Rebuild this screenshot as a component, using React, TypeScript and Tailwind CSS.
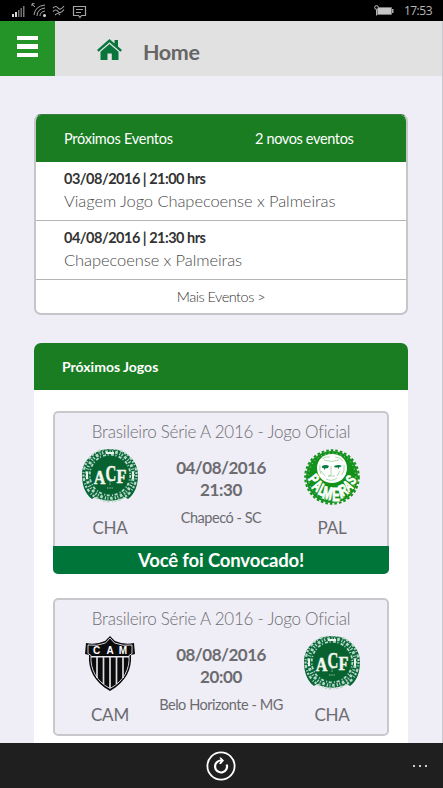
import type { ReactNode } from "react";

const ChapecoenseCrest = () => (
    <svg width="56" height="54" viewBox="0 0 56 54">
        <path d="M28 0C43 0 56 11 56 26c0 10-3 19-10 24l-3-2c-9 5-21 5-30 0l-3 2C3 45 0 36 0 26 0 11 13 0 28 0Z" fill="#08683a" />
        <g fill="none" stroke="#b9d6c5">
            <circle cx="28" cy="26" r="26.5" strokeWidth="2.2" strokeDasharray="2 1.5 1 2.5 3 1.6" />
            <circle cx="28" cy="26" r="23.3" strokeWidth="3" strokeDasharray="1.3 2 2.6 1.8 1 1.4" />
            <circle cx="28" cy="26" r="20.3" strokeWidth="1.8" strokeDasharray="3 1.6 1 2.4" />
        </g>
        <path d="M4 23h2v7H4zM50 23h2v7h-2zM24 3h8v2h-8z" fill="#e8f2ea" />
        <circle cx="28" cy="26" r="18.8" fill="#07622f" />
        <g fill="#f4f6ee" stroke="#f4f6ee" strokeWidth=".5" fontFamily="'Liberation Serif', serif" fontWeight="700" textAnchor="middle">
            <text transform="translate(17.5 34.5) scale(.85 1)" fontSize="19">A</text>
            <text transform="translate(28.8 32) scale(.62 1)" fontSize="24">C</text>
            <text transform="translate(39.5 34) scale(.9 1)" fontSize="18">F</text>
        </g>
        <path d="M28 32v4M25 39h6" stroke="#9fc6ad" strokeDasharray="1 .6" />
    </svg>
);

const PalmeirasCrest = () => (
    <svg width="56" height="56" viewBox="0 0 56 56">
        <circle cx="28" cy="28" r="26" fill="#12911b" />
        <circle cx="28" cy="28" r="26.8" fill="none" stroke="#12911b" strokeWidth="2" strokeDasharray="2.6 2" />
        <circle cx="28" cy="28" r="23.8" fill="none" stroke="#cbeccd" strokeWidth=".8" strokeDasharray="1 3" />
        <path d="M28 5c9 0 15 6 15 14 0 9-7 15-15 15s-15-6-15-15C13 11 19 5 28 5Z" fill="#fff" />
        <path d="M18 10q4-3 8-2m5 0q5 0 8 4M16 16q-1 5 1 9m23-9q1 5-2 10M27 17v9l-3 1h7M22 30q6 3 11-1M17 22l4 5m15-5-3 5M20 11q7 3 15 0" fill="none" stroke="#8cc78f" strokeWidth=".7" />
        <path d="M18 17q4-2 7 0l-1 2-3 .5v2l-1-2-2-1Zm12 0q5-2 8 0l-3 1.500v2l-1-2-3 0Z" fill="#087c45" />
        <g fill="#fff" stroke="#fff" strokeWidth=".8" fontFamily="'Liberation Sans', sans-serif" fontSize="14" fontWeight="700" textAnchor="middle">
            <text transform="translate(6 33) rotate(52) scale(.75 1.05)">P</text>
            <text transform="translate(10 41) rotate(38) scale(.72 1.15)">A</text>
            <text transform="translate(16 46) rotate(26) scale(.72 1.2)">L</text>
            <text transform="translate(22.5 50) rotate(12) scale(.82 1.25)">M</text>
            <text transform="translate(32 52) scale(.8 1.35)">E</text>
            <text transform="translate(38 49) rotate(-16) scale(.8 1.2)">I</text>
            <text transform="translate(42 46) rotate(-27) scale(.7 1.15)">R</text>
            <text transform="translate(47 41) rotate(-38) scale(.66 1.1)">A</text>
            <text transform="translate(51 34) rotate(-52) scale(.7 1.05)">S</text>
        </g>
    </svg>
);

const AtleticoCrest = () => (
    <svg width="56" height="56" viewBox="0 0 56 56">
        <path d="M28 0 33 5q9 4 19 2l1 11-4 1c1 14-5 27-21 36C12 46 6 33 7 19l-4-1 1-11q10 2 19-2Z" fill="#0b0b0c" />
        <path d="M28 2 32.5 7Q41 10.500 50 9v8.5l-3 2C48 33 42 45 28 52.500 14 45 8 33 9 19.500L6 17.500V9Q15 10.500 23.5 7Z" fill="none" stroke="#e8e7ed" strokeWidth=".9" />
        <path d="M9 20.700h38" stroke="#e8e7ed" strokeWidth="1.400" />
        <path d="M15 21v21M21.500 21v27M28 21v31M34.500 21v27M41 21v21" stroke="#dddce2" strokeWidth="1.700" />
        <g fill="#fff" fontFamily="'Liberation Sans', sans-serif" fontSize="10" fontWeight="700" textAnchor="middle">
            <text x="14.500" y="18">C</text>
            <text x="28" y="18">A</text>
            <text x="41" y="18">M</text>
        </g>
    </svg>
);

const StatusBar = () => (
    <div className="flex h-[21px] shrink-0 items-center justify-between bg-black pl-3 pr-[11px] text-[#b9b9b9]">
        <svg width="76" height="18" viewBox="12 1 76 18" fill="none" stroke="#a5a5a5">
            <g stroke="none" fill="#d8d8d8">
                <path d="M12 13h2v3h-2zM15 11h2v5h-2z" />
                <path d="M18 9h1.4v7H18zM20.500 7h1.400v9h-1.400zM23 5h1.500v11H23z" fill="#777" />
                <circle cx="44.500" cy="14.500" r="1.500" />
            </g>
            <path d="M34 14q1-9 11-10M37 15q0-7 8-8M40 15q0-4 5-5M32 3l3 3M32 5V2.700h2.500" />
            <path d="M53 7q3-3 5 0t6-2M53 10.500q3-3 5 0t6-2M55 14q3-3 5 0" strokeWidth="1.200" />
            <path d="M73.500 5.500h12v9h-4l-1.500 2-1.500-2h-5zM76 8.500h7M76 11.500h5" strokeWidth="1.200" />
        </svg>
        <div className="flex items-center gap-[9px]">
            <svg width="22" height="14" viewBox="0 0 22 14">
                <path d="M4.500 3.500h14v7h-14z" fill="#c5c5c5" stroke="#777" />
                <path d="M19 5h1.500v4H19z" fill="#aaa" />
                <circle cx="3.500" cy="3.500" r="1.900" fill="#111" stroke="#b5b5b5" />
                <path d="M3.500 5.500v6" stroke="#b5b5b5" />
            </svg>
            <span className="font-['Open_Sans','Noto_Sans',sans-serif] text-[12px] leading-5 tracking-[-0.5px]">17:53</span>
        </div>
    </div>
);

const Header = () => (
    <header className="flex h-[55px] shrink-0 items-center bg-[#e1e1e1]">
        <button className="flex h-[55px] w-[55px] flex-col items-center bg-[#259428] pt-[15px] gap-1">
            <span className="h-[4px] w-[21px] bg-white" />
            <span className="h-[5px] w-[21px] bg-white" />
            <span className="h-[4px] w-[21px] bg-white" />
        </button>
        <svg className="ml-[42px] mt-[1px]" width="25" height="21" viewBox="0 0 25 21" fill="#08753b">
            <path d="M12.500 0 0 11l1.600 1.700L12.500 3.300l10.900 9.400L25 11l-4-3.500V1h-3.500v3.400Z" />
            <path d="M12.500 5 3.500 12.700V21h7v-6.500h4.300V21h6.700v-8.300Z" />
        </svg>
        <h1 className="ml-[21px] mt-[6px] text-[21.500px] font-bold leading-7 tracking-[-0.400px] text-[#666]">Home</h1>
    </header>
);

const EventRow = ({ date, title }: { date: string; title: string }) => (
    <div className="h-[59px] border-b border-[#b5b5b8] pl-[28px] pt-[6px]">
        <p className="text-[14.500px] font-bold leading-[22px] tracking-[-0.500px] text-[#333]">{date}</p>
        <p className="text-[16.500px] font-light leading-[22px] tracking-[-0.080px] text-[#4c4c4c]">{title}</p>
    </div>
);

type Team = { name: string; crest: ReactNode };

type MatchProps = {
    home: Team;
    away: Team;
    date: string;
    time: string;
    place: string;
    called?: boolean;
};

const TeamColumn = ({ name, crest }: Team) => (
    <div className="flex w-[110px] flex-col items-center">
        <div className="h-[67px]">{crest}</div>
        <span className="text-[17px] leading-6 tracking-[-0.2px] text-[#6b6b70]">{name}</span>
    </div>
);

const MatchCard = ({ home, away, date, time, place, called }: MatchProps) => (
    <div className="overflow-hidden rounded-[5px] bg-[#efedf5]">
        <div className={called ? "h-[135px] rounded-t-[5px] border-2 border-b-0 border-[#c8c7cc] text-center" : "h-[138px] rounded-[5px] border-2 border-[#c8c7cc] text-center"}>
            <p className="pt-[7px] text-[17px] font-light leading-6 tracking-[-0.24px] text-[#6e6e73]">{title}</p>
            <div className="flex justify-between pt-[5px]">
                <TeamColumn {...home} />
                <div className="w-[128px] shrink-0 -mx-3 pt-2 text-[#6b6b70]">
                    <p className="text-[17px] font-bold leading-[22px] tracking-[-0.500px]">{date}</p>
                    <p className="text-[17px] font-bold leading-[22px] tracking-[-0.400px]">{time}</p>
                    <p className="whitespace-nowrap pt-[6px] text-[14.500px] leading-[22px] tracking-[-0.460px]">{place}</p>
                </div>
                <TeamColumn {...away} />
            </div>
        </div>
        {called && (
            <div className="h-7 bg-[#00753a] text-center text-[18.500px] font-bold leading-7 tracking-[-0.15px] text-white">Você foi Convocado!</div>
        )}
    </div>
);

const title = "Brasileiro Série A 2016 - Jogo Oficial";

const chapecoense = { name: "CHA", crest: <ChapecoenseCrest /> };
const palmeiras = { name: "PAL", crest: <PalmeirasCrest /> };
const atletico = { name: "CAM", crest: <AtleticoCrest /> };

const App = () => {
    return (
        <div className="flex h-[788px] w-[443px] flex-col overflow-hidden bg-[#efedf5] font-['Lato',sans-serif]">
            <StatusBar />
            <div className="flex min-h-0 flex-1 flex-col border-r border-[#c9c8ce]">
                <Header />
                <main className="min-h-0 flex-1 overflow-hidden pl-[34px] pt-[38px]">
                    <section className="h-[201px] w-[374px] overflow-hidden rounded-[7px] border-2 border-t border-[#c6c6c9] border-t-[#3d7d44] bg-white">
                        <div className="flex h-[47px] items-center bg-[#1a7d22] pl-[28px] text-[14.500px] tracking-[-0.260px] text-white">
                            <span className="w-[191px]">Próximos Eventos</span>
                            <span className="tracking-[-0.360px]">2 novos eventos</span>
                        </div>
                        <EventRow date="03/08/2016 | 21:00 hrs" title="Viagem Jogo Chapecoense x Palmeiras" />
                        <EventRow date="04/08/2016 | 21:30 hrs" title="Chapecoense x Palmeiras" />
                        <p className="pt-[6px] text-center text-[14.500px] font-light leading-[22px] tracking-[-0.5px] text-[#333]">Mais Eventos &gt;</p>
                    </section>

                    <section className="mt-[28px] h-[420px] w-[374px] overflow-hidden rounded-t-[7px] bg-white">
                        <h2 className="h-[47px] bg-[#1a7d22] pl-[28px] text-[14px] font-bold leading-[47px] text-white">Próximos Jogos</h2>
                        <div className="flex flex-col gap-6 px-[19px] pt-[21px]">
                            <MatchCard home={chapecoense} away={palmeiras} date="04/08/2016" time="21:30" place="Chapecó - SC" called />
                            <MatchCard home={atletico} away={chapecoense} date="08/08/2016" time="20:00" place="Belo Horizonte - MG" />
                        </div>
                    </section>
                </main>
            </div>
            <footer className="grid h-[45px] shrink-0 grid-cols-3 items-center bg-[#1f1f1f]">
                <svg className="col-start-2 justify-self-center" width="30" height="30" viewBox="0 0 30 30" fill="none" stroke="#fff">
                    <circle cx="15" cy="15" r="13.600" strokeWidth="1.800" />
                    <path d="M15.500 9.500a6 6 0 1 0 5.200 4" strokeWidth="2.200" />
                    <path d="M13.500 6.500h1.500l3 3-3 3.500h-2l2-3.500z" fill="#fff" stroke="none" />
                </svg>
                <div className="flex justify-end gap-1 pr-[16px]">
                    <span className="size-[2px] bg-[#ccc]" />
                    <span className="size-[2px] bg-[#ccc]" />
                    <span className="size-[2px] bg-[#ccc]" />
                </div>
            </footer>
        </div>
    );
};

export default App;
